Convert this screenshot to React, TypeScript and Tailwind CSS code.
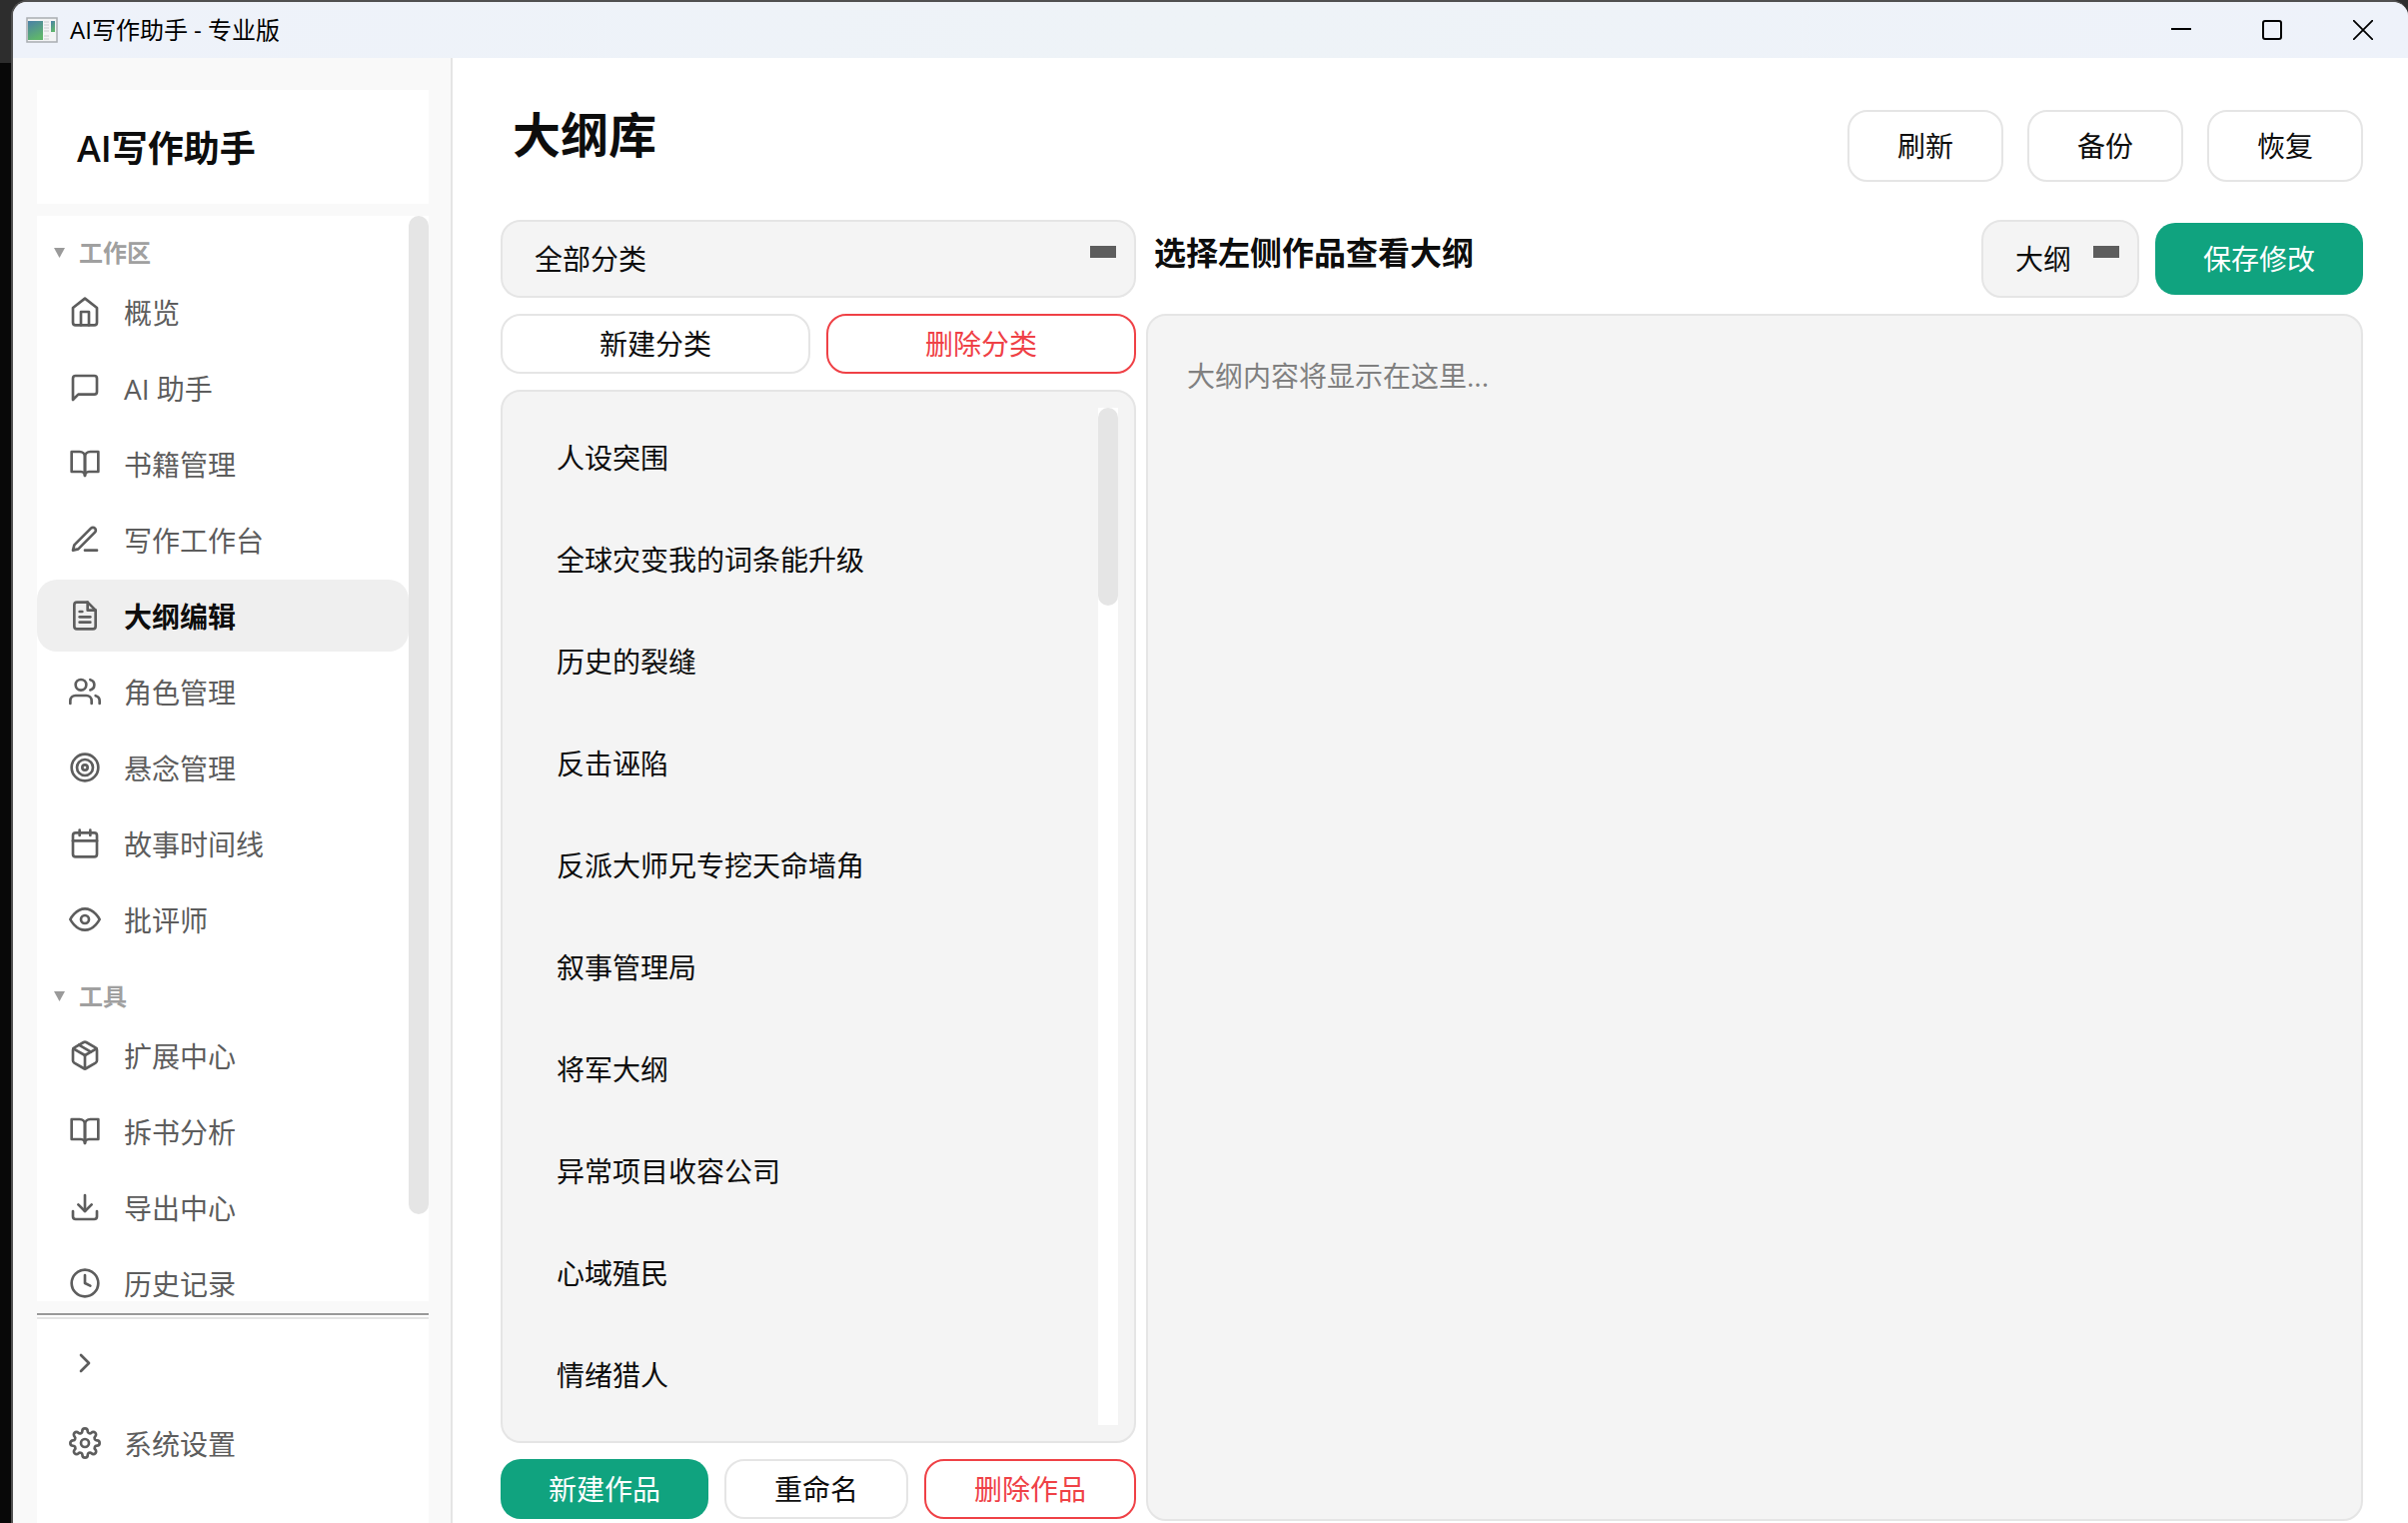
import React, { useState } from 'react';
import {
  FiBookOpen,
  FiCalendar,
  FiChevronRight,
  FiClock,
  FiDownload,
  FiEdit3,
  FiEye,
  FiFileText,
  FiHome,
  FiMessageSquare,
  FiPackage,
  FiSettings,
  FiTarget,
  FiUsers,
} from 'react-icons/fi';
import type { IconType } from 'react-icons';
import clsx from 'clsx';

type NavItem = { label: string; icon: IconType };

const sections: { title: string; items: NavItem[] }[] = [
  {
    title: '工作区',
    items: [
      { label: '概览', icon: FiHome },
      { label: 'AI 助手', icon: FiMessageSquare },
      { label: '书籍管理', icon: FiBookOpen },
      { label: '写作工作台', icon: FiEdit3 },
      { label: '大纲编辑', icon: FiFileText },
      { label: '角色管理', icon: FiUsers },
      { label: '悬念管理', icon: FiTarget },
      { label: '故事时间线', icon: FiCalendar },
      { label: '批评师', icon: FiEye },
    ],
  },
  {
    title: '工具',
    items: [
      { label: '扩展中心', icon: FiPackage },
      { label: '拆书分析', icon: FiBookOpen },
      { label: '导出中心', icon: FiDownload },
      { label: '历史记录', icon: FiClock },
    ],
  },
];

const works = [
  '人设突围',
  '全球灾变我的词条能升级',
  '历史的裂缝',
  '反击诬陷',
  '反派大师兄专挖天命墙角',
  '叙事管理局',
  '将军大纲',
  '异常项目收容公司',
  '心域殖民',
  '情绪猎人',
];

const variants = {
  plain: 'border-2 border-[#e5e5e5] bg-white text-[#0d0d0d]',
  danger: 'border-2 border-[#ef4146] bg-white text-[#ef4146]',
  primary: 'bg-[#10a37f] text-white',
};

const Button = ({
  variant = 'plain',
  className,
  children,
}: {
  variant?: keyof typeof variants;
  className?: string;
  children: React.ReactNode;
}) => (
  <button type="button" className={clsx('shrink-0 rounded-[20px] text-[28px] leading-9', variants[variant], className)}>
    {children}
  </button>
);

const Select = ({ label, options, className }: { label: string; options: string[]; className?: string }) => (
  <div className={clsx('relative h-[78px] shrink-0', className)}>
    <select
      aria-label={label}
      className="h-full w-full appearance-none rounded-[20px] border-2 border-[#e5e5e5] bg-[#f4f4f4] pl-8 text-[28px] text-[#0d0d0d]"
    >
      {options.map((o) => (
        <option key={o}>{o}</option>
      ))}
    </select>
    <span className="pointer-events-none absolute top-[26px] right-5 h-3 w-[26px] bg-[#5d5d5d]" />
  </div>
);

const AppIcon = () => (
  <svg width="32" height="26" viewBox="0 0 32 26">
    <defs>
      <linearGradient id="pane" x1="0" y1="0" x2="0.4" y2="1">
        <stop offset="0" stopColor="#4a80a8" />
        <stop offset="1" stopColor="#5fb56c" />
      </linearGradient>
    </defs>
    <rect x="1" y="1" width="30" height="24" fill="#f3f4f5" stroke="#a9adb1" strokeWidth="1.5" />
    <rect x="2" y="4" width="15" height="19" fill="url(#pane)" />
    <path d="M18 5h5M18 8h5M18 11h5M18 14h5M18 19h5M18 22h5" stroke="#c9ccd0" strokeWidth="1.2" />
    <rect x="25" y="4" width="4" height="11" fill="url(#pane)" />
  </svg>
);

const TitleBar = () => (
  <header className="flex h-14 shrink-0 items-center bg-gradient-to-r from-[#eef2fa] via-[#eef3f7] to-[#eef2fa] pl-[13px]">
    <AppIcon />
    <span className="ml-3 flex-1 text-[24px] leading-8 text-black">AI写作助手 - 专业版</span>
    <button type="button" aria-label="最小化" className="flex h-full w-[91px] items-center justify-center">
      <svg width="20" height="20" viewBox="0 0 20 20" stroke="#000" strokeWidth="2">
        <path d="M0 9h20" />
      </svg>
    </button>
    <button type="button" aria-label="最大化" className="flex h-full w-[91px] items-center justify-center">
      <svg width="20" height="20" viewBox="0 0 20 20" fill="none" stroke="#000" strokeWidth="2">
        <rect x="1" y="1" width="18" height="18" rx="2" />
      </svg>
    </button>
    <button type="button" aria-label="关闭" className="flex h-full w-[91px] items-center justify-center">
      <svg width="20" height="20" viewBox="0 0 20 20" stroke="#000" strokeWidth="1.8">
        <path d="M0 0l20 20M20 0L0 20" />
      </svg>
    </button>
  </header>
);

const NavButton = ({
  item,
  active,
  ariaLabel,
  onClick,
}: {
  item: NavItem;
  active?: boolean;
  ariaLabel?: string;
  onClick?: () => void;
}) => (
  <button
    type="button"
    aria-label={ariaLabel}
    onClick={onClick}
    className={clsx(
      'flex h-[72px] w-full shrink-0 items-center gap-[23px] rounded-[20px] pl-8 text-left text-[28px] leading-7',
      active ? 'bg-[#efefef] font-bold text-[#0d0d0d]' : 'text-[#5d5d5d]',
    )}
  >
    <item.icon size={32} className="shrink-0 text-[#5d5d5d]" />
    <span className="pt-[2px]">{item.label}</span>
  </button>
);

const Sidebar = () => {
  const [active, setActive] = useState('大纲编辑');

  return (
    <aside className="flex w-[440px] shrink-0 flex-col border-r-2 border-[#e5e5e5] bg-[#f9f9f9] pt-8 pr-[22px] pl-6">
      <div className="mb-3 flex h-[114px] shrink-0 items-center bg-white pt-1 pl-10 text-[36px] font-semibold text-[#0d0d0d]">
        AI写作助手
      </div>

      <div className="flex min-h-0 flex-1 bg-white">
        <nav className="min-w-0 flex-1 overflow-hidden">
          {sections.map((section) => (
            <section key={section.title}>
              <h2 className="flex h-[60px] items-center gap-3 pt-[14px] pl-4 text-[24px] leading-8 font-bold text-[#a0a0a0]">
                <svg width="14" height="10" viewBox="0 0 14 10" fill="#9a9a9a">
                  <path d="M1 0h11L6.5 10z" />
                </svg>
                {section.title}
              </h2>
              {section.items.map((item) => (
                <div key={item.label} className="mb-1">
                  <NavButton item={item} active={item.label === active} onClick={() => setActive(item.label)} />
                </div>
              ))}
            </section>
          ))}
        </nav>
        <div className="w-5">
          <div className="h-[92%] rounded-full bg-[#e5e5e5]" />
        </div>
      </div>

      <div className="mt-3 h-1 shrink-0 border-t-2 border-[#999999] bg-white" />
      <div className="flex h-[206px] shrink-0 flex-col gap-2 border-t-2 border-[#e5e5e5] bg-white pt-2">
        <NavButton item={{ label: '', icon: FiChevronRight }} ariaLabel="展开" />
        <NavButton item={{ label: '系统设置', icon: FiSettings }} />
      </div>
    </aside>
  );
};

const WorkPanel = () => (
  <div className="flex w-[636px] shrink-0 flex-col gap-4 pb-[2px]">
    <Select label="分类" options={['全部分类']} />
    <div className="grid grid-cols-2 gap-4">
      <Button className="h-[60px]">新建分类</Button>
      <Button variant="danger" className="h-[60px]">
        删除分类
      </Button>
    </div>
    <div className="flex min-h-0 flex-1 rounded-[20px] border-2 border-[#e5e5e5] bg-[#f4f4f4] p-4">
      <ul className="min-w-0 flex-1 overflow-hidden">
        {works.map((name) => (
          <li key={name}>
            <button type="button" className="h-[102px] w-full pb-[2px] pl-[38px] text-left text-[28px] text-[#0d0d0d]">
              {name}
            </button>
          </li>
        ))}
      </ul>
      <div className="w-5 bg-white">
        <div className="h-[198px] rounded-full bg-[#e5e5e5]" />
      </div>
    </div>
    <div className="flex gap-4">
      <Button variant="primary" className="h-[60px] w-[208px]">
        新建作品
      </Button>
      <Button className="h-[60px] w-[184px]">重命名</Button>
      <Button variant="danger" className="h-[60px] flex-1">
        删除作品
      </Button>
    </div>
  </div>
);

const OutlinePanel = () => (
  <div className="flex min-w-0 flex-1 flex-col gap-4">
    <div className="flex items-center gap-4">
      <h2 className="flex-1 self-start pl-2 text-[32px] leading-[66px] font-bold text-[#0d0d0d]">选择左侧作品查看大纲</h2>
      <Select label="类型" options={['大纲']} className="w-[158px]" />
      <Button variant="primary" className="h-[72px] w-[208px]">
        保存修改
      </Button>
    </div>
    <textarea
      aria-label="大纲内容"
      placeholder="大纲内容将显示在这里..."
      className="min-h-0 flex-1 resize-none rounded-[20px] border-2 border-[#e5e5e5] bg-[#f4f4f4] px-[39px] py-[39px] text-[28px] leading-[42px] text-[#0d0d0d] placeholder:text-[#808080]"
    />
  </div>
);

const App: React.FC = () => {
  return (
    <div className="h-screen bg-linear-to-b from-[#2d2d2d] from-[63px] to-[#080808] to-[63px] pl-[11px] font-['Open_Sans','Noto_Sans_CJK_SC',sans-serif]">
      <div className="flex h-full flex-col overflow-hidden rounded-t-[16px] border-t-2 border-l-2 border-[#505050] bg-white">
        <TitleBar />
        <div className="flex min-h-0 flex-1">
          <Sidebar />
          <main className="flex min-w-0 flex-1 flex-col pt-[52px] pr-[45px] pl-12">
            <div className="mb-[38px] flex items-start gap-6">
              <h1 className="flex-1 pl-3 text-[48px] leading-[50px] font-bold text-[#0d0d0d]">大纲库</h1>
              <Button className="h-[72px] w-[156px]">刷新</Button>
              <Button className="h-[72px] w-[156px]">备份</Button>
              <Button className="h-[72px] w-[156px]">恢复</Button>
            </div>
            <div className="flex min-h-0 flex-1 gap-[10px] pb-[2px]">
              <WorkPanel />
              <OutlinePanel />
            </div>
          </main>
        </div>
      </div>
    </div>
  );
};

export default App;
